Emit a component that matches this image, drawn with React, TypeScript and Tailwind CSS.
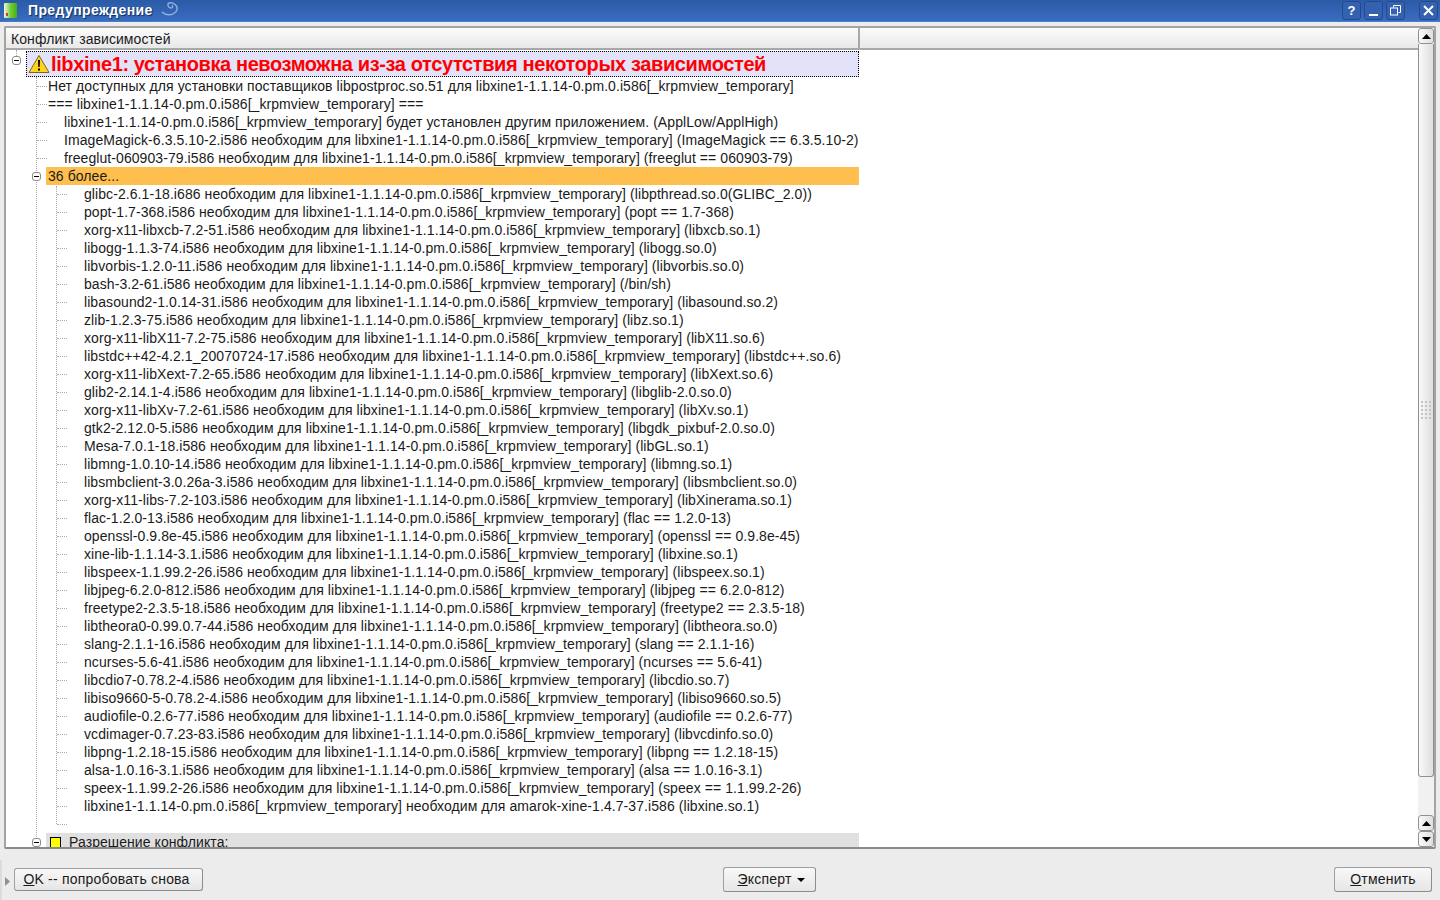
const R = "libxine1-1.1.14-0.pm.0.i586[_krpmview_temporary]";
const deps: string[] = [
  `glibc-2.6.1-18.i686 необходим для ${R} (libpthread.so.0(GLIBC_2.0))`,
  `popt-1.7-368.i586 необходим для ${R} (popt == 1.7-368)`,
  `xorg-x11-libxcb-7.2-51.i586 необходим для ${R} (libxcb.so.1)`,
  `libogg-1.1.3-74.i586 необходим для ${R} (libogg.so.0)`,
  `libvorbis-1.2.0-11.i586 необходим для ${R} (libvorbis.so.0)`,
  `bash-3.2-61.i586 необходим для ${R} (/bin/sh)`,
  `libasound2-1.0.14-31.i586 необходим для ${R} (libasound.so.2)`,
  `zlib-1.2.3-75.i586 необходим для ${R} (libz.so.1)`,
  `xorg-x11-libX11-7.2-75.i586 необходим для ${R} (libX11.so.6)`,
  `libstdc++42-4.2.1_20070724-17.i586 необходим для ${R} (libstdc++.so.6)`,
  `xorg-x11-libXext-7.2-65.i586 необходим для ${R} (libXext.so.6)`,
  `glib2-2.14.1-4.i586 необходим для ${R} (libglib-2.0.so.0)`,
  `xorg-x11-libXv-7.2-61.i586 необходим для ${R} (libXv.so.1)`,
  `gtk2-2.12.0-5.i586 необходим для ${R} (libgdk_pixbuf-2.0.so.0)`,
  `Mesa-7.0.1-18.i586 необходим для ${R} (libGL.so.1)`,
  `libmng-1.0.10-14.i586 необходим для ${R} (libmng.so.1)`,
  `libsmbclient-3.0.26a-3.i586 необходим для ${R} (libsmbclient.so.0)`,
  `xorg-x11-libs-7.2-103.i586 необходим для ${R} (libXinerama.so.1)`,
  `flac-1.2.0-13.i586 необходим для ${R} (flac == 1.2.0-13)`,
  `openssl-0.9.8e-45.i586 необходим для ${R} (openssl == 0.9.8e-45)`,
  `xine-lib-1.1.14-3.1.i586 необходим для ${R} (libxine.so.1)`,
  `libspeex-1.1.99.2-26.i586 необходим для ${R} (libspeex.so.1)`,
  `libjpeg-6.2.0-812.i586 необходим для ${R} (libjpeg == 6.2.0-812)`,
  `freetype2-2.3.5-18.i586 необходим для ${R} (freetype2 == 2.3.5-18)`,
  `libtheora0-0.99.0.7-44.i586 необходим для ${R} (libtheora.so.0)`,
  `slang-2.1.1-16.i586 необходим для ${R} (slang == 2.1.1-16)`,
  `ncurses-5.6-41.i586 необходим для ${R} (ncurses == 5.6-41)`,
  `libcdio7-0.78.2-4.i586 необходим для ${R} (libcdio.so.7)`,
  `libiso9660-5-0.78.2-4.i586 необходим для ${R} (libiso9660.so.5)`,
  `audiofile-0.2.6-77.i586 необходим для ${R} (audiofile == 0.2.6-77)`,
  `vcdimager-0.7.23-83.i586 необходим для ${R} (libvcdinfo.so.0)`,
  `libpng-1.2.18-15.i586 необходим для ${R} (libpng == 1.2.18-15)`,
  `alsa-1.0.16-3.1.i586 необходим для ${R} (alsa == 1.0.16-3.1)`,
  `speex-1.1.99.2-26.i586 необходим для ${R} (speex == 1.1.99.2-26)`,
  `${R} необходим для amarok-xine-1.4.7-37.i586 (libxine.so.1)`,
];

function Toggle() {
  return (
    <span className="flex h-[9px] w-[9px] items-center justify-center rounded-[3px] border border-[#8a8a8a] bg-white">
      <span className="h-px w-[5px] bg-black" />
    </span>
  );
}

function Row({ children, guide }: { children?: React.ReactNode; guide: "a" | "b" }) {
  return (
    <div className="relative flex h-[18px] items-center whitespace-nowrap">
      {guide === "a" ? (
        <span className="mr-px w-[10px] border-t border-dotted border-[#aaa]" />
      ) : (
        <span className="mr-[17px] w-[10px] border-t border-dotted border-[#aaa]" />
      )}
      <span>{children}</span>
    </div>
  );
}

function ScrollBtn({ up }: { up: boolean }) {
  return (
    <div className="flex h-4 w-4 shrink-0 items-center justify-center rounded-[3px] border border-[#909090] bg-gradient-to-r from-[#fafafa] to-[#dedede]">
      <svg width="9" height="5" viewBox="0 0 9 5">
        <path d={up ? "M4.5 0 L9 5 L0 5 Z" : "M0 0 L9 0 L4.5 5 Z"} fill="#000" />
      </svg>
    </div>
  );
}

function TitleBtn({ children, className }: { children: React.ReactNode; className: string }) {
  return (
    <div className={`${className} flex h-[19px] w-[19px] items-center justify-center rounded-[3px] border border-[#234a8c] bg-[#3462b0]`}>
      {children}
    </div>
  );
}

function Btn({ w, children, h = "h-[25px]", extra = "" }: { w: string; children: React.ReactNode; h?: string; extra?: string }) {
  return (
    <button className={`${w} ${h} ${extra} flex items-center justify-center rounded-[3px] border border-[#a0a0a0] border-r-[#8c8c8c] border-b-[#8c8c8c] bg-gradient-to-b from-[#f8f8f8] to-[#e6e6e6] text-[14px] tracking-[0.2px] text-[#1a1a1a]`}>
      {children}
    </button>
  );
}

export default function App() {
  return (
    <div className="flex h-[900px] w-[1440px] flex-col overflow-hidden bg-[#ececec] font-['Liberation_Sans',sans-serif] text-[14px] text-black">
      {/* Title bar */}
      <div className="flex h-[22px] shrink-0 items-center border-b border-[#4a7ccc] bg-gradient-to-b from-[#2b5aa6] to-[#3a6cc0]">
        <div className="relative ml-[4px] h-[15px] w-[13px] rounded-[1px] bg-gradient-to-r from-[#f0f4e0] via-[#70d030] to-[#40b010]">
          <span className="absolute bottom-[2px] left-[2px] h-[3px] w-[2px] bg-[#d04030]" />
        </div>
        <span className="ml-[11px] text-[14px] font-bold tracking-[0.38px] text-white [text-shadow:1px_1px_1px_#0a2a60]">Предупреждение</span>
        <svg className="mb-[4px] ml-[8px]" width="18" height="16" viewBox="0 0 18 16" fill="none" stroke="#8fb0e0" strokeWidth="1.4">
          <path d="M1 11 C5 15 13 15 16 9 C17 4 12 1 8 2 C6 3 7 7 10 7 C12 7 12 5 11 4" />
        </svg>
        <div className="ml-auto flex items-center">
          <TitleBtn className="text-[13px] leading-none font-bold text-white">?</TitleBtn>
          <TitleBtn className="ml-[3px]">
            <span className="mt-[8px] h-[2px] w-[9px] bg-white" />
          </TitleBtn>
          <TitleBtn className="ml-[3px]">
            <svg width="11" height="11" viewBox="0 0 11 11" fill="none" stroke="#fff" strokeWidth="1">
              <path d="M3.5 2.5V.5H10.5V7.5H8.5" />
              <rect x="0.5" y="3" width="7" height="7" />
            </svg>
          </TitleBtn>
          <TitleBtn className="mr-[2px] ml-[14px]">
            <svg width="11" height="11" viewBox="0 0 11 11" stroke="#fff" strokeWidth="2">
              <path d="M1 1L10 10M10 1L1 10" />
            </svg>
          </TitleBtn>
        </div>
      </div>

      {/* Main panel */}
      <div className="mt-[4px] ml-[4px] flex h-[823px] w-[1432px] shrink-0 overflow-hidden rounded-[2px] border-2 border-[#a3a3a3] border-b-[#8a8a8a] bg-white">
        <div className="flex min-w-0 flex-1 flex-col tracking-[0.075px]">
          {/* Header */}
          <div className="flex h-[22px] shrink-0 border-b-2 border-[#a8a8a8] bg-gradient-to-b from-[#fbfbfb] to-[#e9e9e9]">
            <div className="flex w-[854px] items-center border-r-2 border-[#a8a8a8] pt-[2px] pl-[5px] text-[#1a1a1a]">Конфликт зависимостей</div>
          </div>
          {/* Tree */}
          <div className="relative min-h-0 flex-1 overflow-hidden text-[#1a1a1a]">
            {/* Tree guide lines */}
            <span className="absolute top-0 left-[10px] h-[6px] border-l border-dotted border-[#aaa]" />
            <span className="absolute top-[27px] left-[30px] h-[770px] border-l border-dotted border-[#aaa]" />
            <span className="absolute top-[136px] left-[50px] h-[638px] border-l border-dotted border-[#aaa]" />
            <div className="absolute top-[6px] left-[6px]"><Toggle /></div>

            <div className="mt-px w-[853px] pl-[20px]">
              <div className="flex h-[26px] items-center border border-dotted border-black bg-[#e2e2f8]">
                <svg className="mx-px shrink-0" width="22" height="20" viewBox="0 0 22 20">
                  <path d="M11 1.5 L21 18.5 L1 18.5 Z" fill="#ffd21f" stroke="#7a6a20" strokeWidth="1" strokeLinejoin="round" />
                  <path d="M10 6h2l-.3 7h-1.4zM10 14.5h2v2h-2z" fill="#000" />
                </svg>
                <span className="text-[20px] leading-none font-bold tracking-[-0.385px] whitespace-nowrap text-[#ff0000]">libxine1: установка невозможна из-за отсутствия некоторых зависимостей</span>
              </div>
            </div>

            <div className="pl-[31px]">
              <Row guide="a">Нет доступных для установки поставщиков libpostproc.so.51 для {R}</Row>
              <Row guide="a">=== {R} ===</Row>
              <Row guide="b">{R} будет установлен другим приложением. (ApplLow/ApplHigh)</Row>
              <Row guide="b">ImageMagick-6.3.5.10-2.i586 необходим для {R} (ImageMagick == 6.3.5.10-2)</Row>
              <Row guide="b">freeglut-060903-79.i586 необходим для {R} (freeglut == 060903-79)</Row>
            </div>

            <div className="relative w-[853px] pl-[40px]">
              <div className="absolute top-[5px] left-[26px]"><Toggle /></div>
              <div className="flex h-[18px] items-center bg-[#ffbf4f] pl-[2px]">36 более...</div>
            </div>

            <div className="pl-[51px]">
              {deps.map((d) => (
                <Row key={d} guide="b">{d}</Row>
              ))}
              <Row guide="b" />
            </div>

            <div className="relative w-[853px] pl-[40px]">
              <div className="absolute top-[5px] left-[26px]"><Toggle /></div>
              <div className="flex h-[18px] items-center bg-[#e0e0e0]">
                <span className="mr-[8px] ml-[4px] h-[11px] w-[11px] border border-black bg-[#ffff00]" />
                Разрешение конфликта:
              </div>
            </div>
          </div>
        </div>

        {/* Scrollbar */}
        <div className="flex w-[16px] shrink-0 flex-col bg-white">
          <ScrollBtn up />
          <div className="flex h-[733px] shrink-0 flex-col items-center justify-center rounded-b-[3px] border border-t-0 border-[#909090] bg-gradient-to-r from-[#fafafa] to-[#dedede]">
            <div className="grid grid-cols-3 gap-[2px]">
              {Array.from({ length: 15 }).map((_, i) => (
                <span key={i} className="h-[2px] w-[2px] bg-[#c4c4c4]" />
              ))}
            </div>
          </div>
          <div className="flex-1 bg-[#f1f1f1]" />
          <ScrollBtn up />
          <ScrollBtn up={false} />
        </div>
      </div>

      {/* Bottom bar */}
      <div className="relative flex flex-1 items-center pt-[10px] pr-[8px] pl-[14px]">
        <span className="absolute top-[11px] left-0 h-[40px] w-[2px] bg-[#dcdcdc]" />
        <svg className="absolute top-[28px] left-[5px]" width="5" height="9" viewBox="0 0 5 9">
          <path d="M0 0 L5 4.5 L0 9 Z" fill="#909090" />
        </svg>
        <Btn w="w-[189px]" h="h-[23px]" extra="pr-[4px]"><span><u>O</u>K -- попробовать снова</span></Btn>
        <div className="ml-[520px]">
          <Btn w="w-[93px]" extra="pl-[3px]">
            <span><u>Э</u>ксперт</span>
            <svg className="ml-[5px]" width="8" height="4" viewBox="0 0 8 4"><path d="M0 0H8L4 4Z" fill="#000" /></svg>
          </Btn>
        </div>
        <div className="ml-auto">
          <Btn w="w-[98px]"><span><u>О</u>тменить</span></Btn>
        </div>
      </div>
    </div>
  );
}
